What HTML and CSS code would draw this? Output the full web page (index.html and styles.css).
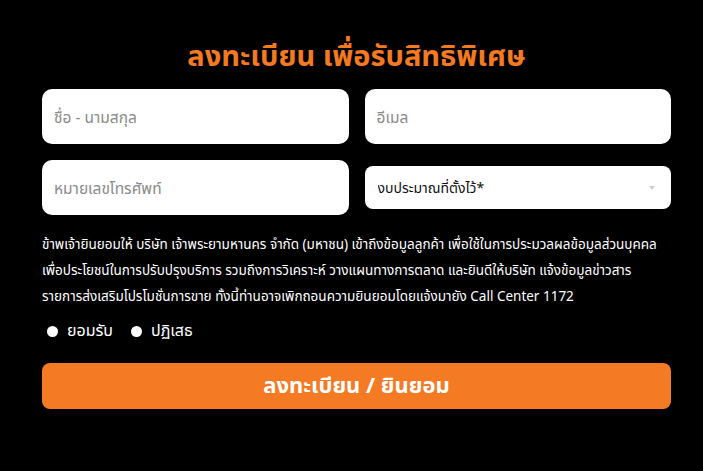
FILE: index.html
```html
<!DOCTYPE html>
<html lang="th">
<head>
    <meta charset="UTF-8">
    <meta name="viewport" content="width=device-width, initial-scale=1.0">
    <title>ลงทะเบียน</title>
    <link rel="stylesheet" href="styles.css">
</head>
<body>
    <div class="register">
        <h1 class="register-title">ลงทะเบียน เพื่อรับสิทธิพิเศษ</h1>
        <form class="register-form">
            <div class="fields">
                <input type="text" class="field" placeholder="ชื่อ - นามสกุล">
                <input type="email" class="field" placeholder="อีเมล">
                <input type="tel" class="field" placeholder="หมายเลขโทรศัพท์">
                <div class="select-wrap">
                    <select class="field-select">
                        <option>งบประมาณที่ตั้งไว้*</option>
                    </select>
                    <span class="select-arrow"></span>
                </div>
            </div>
            <p class="consent">ข้าพเจ้ายินยอมให้ บริษัท เจ้าพระยามหานคร จำกัด (มหาชน) เข้าถึงข้อมูลลูกค้า เพื่อใช้ในการประมวลผลข้อมูลส่วนบุคคล<br>
                เพื่อประโยชน์ในการปรับปรุงบริการ รวมถึงการวิเคราะห์ วางแผนทางการตลาด และยินดีให้บริษัท แจ้งข้อมูลข่าวสาร<br>
                รายการส่งเสริมโปรโมชั่นการขาย ทั้งนี้ท่านอาจเพิกถอนความยินยอมโดยแจ้งมายัง Call Center 1172</p>
            <div class="choices">
                <label class="choice"><span class="dot"></span>ยอมรับ</label>
                <label class="choice"><span class="dot"></span>ปฏิเสธ</label>
            </div>
            <button type="submit" class="submit">ลงทะเบียน / ยินยอม</button>
        </form>
    </div>
</body>
</html>
```

FILE: styles.css
```css
body {
    margin: 0;
    background-color: #000;
    color: #fff;
    font-family: "Noto Sans", "Noto Sans Thai", sans-serif;
}

.register {
    width: 629px;
    margin: 0 42px;
    padding-top: 37px;
}

.register-title {
    margin: 0 0 17px;
    text-align: center;
    font-size: 29px;
    line-height: 35px;
    font-weight: 700;
    color: #f47a20;
}

.fields {
    display: grid;
    grid-template-columns: 1fr 1fr;
    column-gap: 16px;
    row-gap: 16px;
    align-items: center;
}

.field {
    box-sizing: border-box;
    width: 100%;
    height: 55px;
    padding: 0 12px;
    border: none;
    border-radius: 10px;
    background-color: #fff;
    font-family: inherit;
    font-size: 15.5px;
    color: #333;
}

.field::placeholder {
    color: #8a8a8a;
}

.select-wrap {
    position: relative;
}

.field-select {
    box-sizing: border-box;
    width: 100%;
    height: 43px;
    padding: 0 13px;
    border: none;
    border-radius: 8px;
    background-color: #fff;
    font-family: inherit;
    font-size: 14px;
    color: #111;
    appearance: none;
}

.select-arrow {
    position: absolute;
    right: 16px;
    top: 20px;
    width: 0;
    height: 0;
    border-left: 3px solid transparent;
    border-right: 3px solid transparent;
    border-top: 4px solid #cfcfcf;
}

.consent {
    margin: 16px 0 0;
    font-size: 13.5px;
    line-height: 26px;
    color: #fff;
    white-space: nowrap;
}

.choices {
    display: flex;
    gap: 18px;
    margin-top: 7px;
    padding-left: 5px;
    height: 30px;
    align-items: center;
}

.choice {
    display: flex;
    align-items: center;
    gap: 9px;
    font-size: 16px;
}

.dot {
    width: 11px;
    height: 11px;
    border-radius: 50%;
    background-color: #fff;
}

.submit {
    display: block;
    width: 100%;
    height: 46px;
    margin-top: 17px;
    border: none;
    border-radius: 8px;
    background-color: #f47a24;
    color: #fff;
    font-family: inherit;
    font-size: 22px;
    font-weight: 700;
    cursor: pointer;
}
```
